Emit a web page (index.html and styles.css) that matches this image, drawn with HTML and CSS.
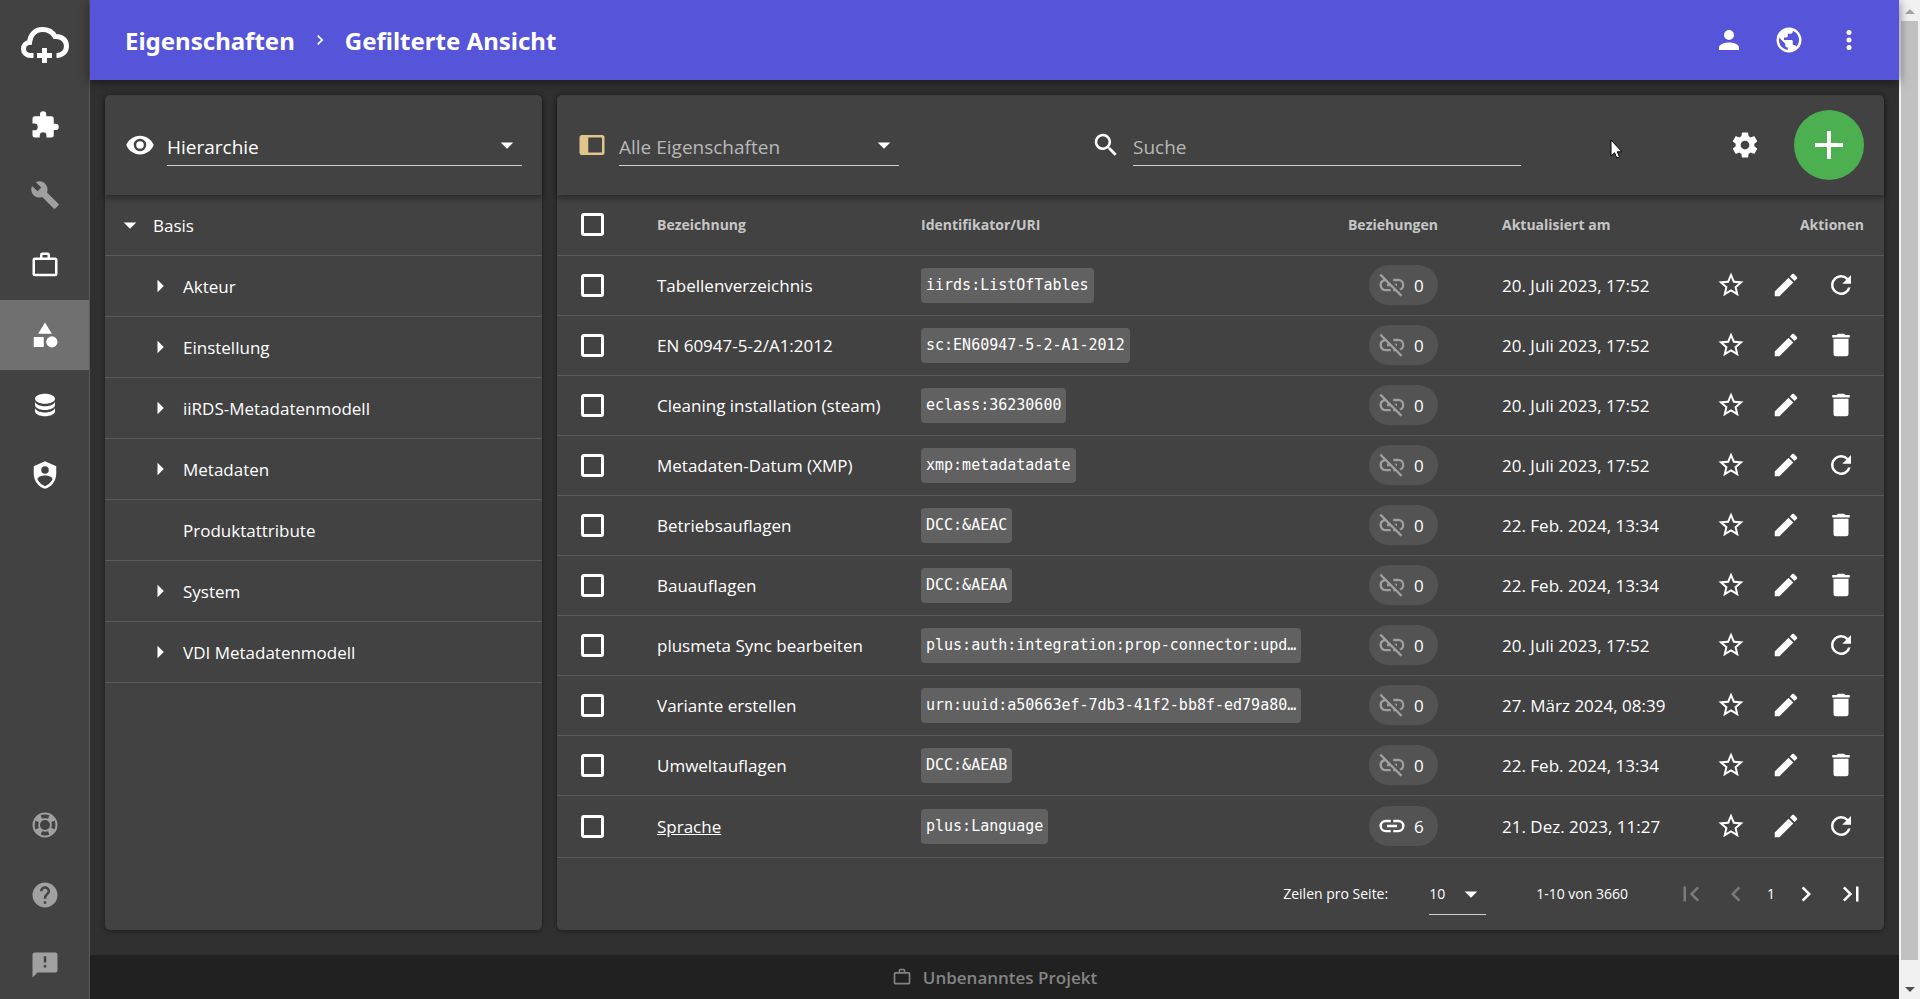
FILE: index.html
```html
<!DOCTYPE html>
<html lang="de">

<head>
    <meta charset="utf-8">
    <title>Eigenschaften</title>
    <meta name="viewport" content="width=device-width, initial-scale=1.0">
    <link rel="stylesheet" href="styles.css">
</head>

<body>
    <svg class="sprite" aria-hidden="true">
        <symbol id="i-puzzle" viewBox="0 0 24 24"><path d="M20.5 11H19V7a2 2 0 0 0-2-2h-4V3.5a2.5 2.5 0 0 0-5 0V5H4a2 2 0 0 0-2 2v3.8h1.5a2.7 2.7 0 0 1 0 5.4H2V20a2 2 0 0 0 2 2h3.8v-1.5a2.7 2.7 0 0 1 5.4 0V22H17a2 2 0 0 0 2-2v-4h1.5a2.5 2.5 0 0 0 0-5z"/></symbol>
        <symbol id="i-wrench" viewBox="0 0 24 24"><path d="M22.7 19l-9.1-9.1c.9-2.3.4-5-1.5-6.9-2-2-5-2.4-7.4-1.3L9 6 6 9 1.6 4.7C.4 7.1.9 10.1 2.9 12.1c1.9 1.9 4.6 2.4 6.9 1.5l9.1 9.1c.4.4 1 .4 1.4 0l2.3-2.3c.5-.4.5-1.1.1-1.4z"/></symbol>
        <symbol id="i-briefcase" viewBox="0 0 24 24"><path d="M20 6h-4V4a2 2 0 0 0-2-2h-4a2 2 0 0 0-2 2v2H4a2 2 0 0 0-2 2v11a2 2 0 0 0 2 2h16a2 2 0 0 0 2-2V8a2 2 0 0 0-2-2zM10 4h4v2h-4V4zm10 15H4V8h16v11z"/></symbol>
        <symbol id="i-shapes" viewBox="0 0 24 24"><path d="M11 13.5v8H3v-8h8zM12 2l5.5 9h-11L12 2zm5.5 11a4.5 4.5 0 1 1 0 9 4.5 4.5 0 0 1 0-9z"/></symbol>
        <symbol id="i-database" viewBox="0 0 24 24"><path d="M12 3C7.6 3 4 4.8 4 7s3.6 4 8 4 8-1.8 8-4-3.6-4-8-4zM4 9v3c0 2.2 3.6 4 8 4s8-1.8 8-4V9c0 2.2-3.6 4-8 4s-8-1.8-8-4zm0 5v3c0 2.2 3.6 4 8 4s8-1.8 8-4v-3c0 2.2-3.6 4-8 4s-8-1.8-8-4z"/></symbol>
        <symbol id="i-shield" viewBox="0 0 24 24"><path d="M12 1L3 5v6c0 5.55 3.84 10.74 9 12 5.16-1.26 9-6.45 9-12V5l-9-4zm0 4a3 3 0 1 1 0 6 3 3 0 0 1 0-6zm5.13 12A9.7 9.7 0 0 1 12 20.92 9.7 9.7 0 0 1 6.87 17c-.34-.5-.63-1-.87-1.53 0-1.65 2.71-3 6-3s6 1.32 6 3c-.24.53-.53 1.03-.87 1.53z"/></symbol>
        <symbol id="i-lifebuoy" viewBox="0 0 24 24"><path d="M19.79 15.41c.74-2.24.75-4.69 0-6.93l-2.74 1.11c.5 1.58.48 3.27 0 4.81l2.74 1.01m-4.24 4.33l-1.11-2.74c-1.58.5-3.29.48-4.82 0l-1.03 2.78c2.25.74 4.71.72 6.96-.04M8.46 4.26l1.13 2.74c1.58-.5 3.3-.48 4.84.02l1.07-2.74c-2.28-.76-4.75-.78-7.04-.02M4.26 15.54l2.74-1.12c-.5-1.56-.48-3.27.02-4.84L4.28 8.51c-.76 2.29-.78 4.74-.02 7.03M12 2a10 10 0 1 1 0 20 10 10 0 0 1 0-20m0 6a4 4 0 1 0 0 8 4 4 0 0 0 0-8z" fill-rule="evenodd"/></symbol>
        <symbol id="i-help" viewBox="0 0 24 24"><path d="M15.07 11.25l-.9.92C13.45 12.89 13 13.5 13 15h-2v-.5c0-1.11.45-2.11 1.17-2.83l1.24-1.26c.37-.36.59-.86.59-1.41a2 2 0 0 0-4 0H8a4 4 0 0 1 8 0c0 .88-.36 1.67-.93 2.25M13 19h-2v-2h2M12 2a10 10 0 1 0 0 20 10 10 0 0 0 0-20z"/></symbol>
        <symbol id="i-alert" viewBox="0 0 24 24"><path d="M13 10h-2V5h2m0 9h-2v-2h2m7-10H4a2 2 0 0 0-2 2v18l4-4h14a2 2 0 0 0 2-2V4a2 2 0 0 0-2-2z"/></symbol>
        <symbol id="i-account" viewBox="0 0 24 24"><path d="M12 4a4 4 0 1 1 0 8 4 4 0 0 1 0-8zm0 10c4.42 0 8 1.79 8 4v2H4v-2c0-2.21 3.58-4 8-4z"/></symbol>
        <symbol id="i-earth" viewBox="0 0 24 24"><path d="M17.9 17.39c-.26-.8-1.01-1.39-1.9-1.39h-1v-3a1 1 0 0 0-1-1H8v-2h2a1 1 0 0 0 1-1V7h2a2 2 0 0 0 2-2v-.41a7.984 7.984 0 0 1 2.9 12.8M11 19.93c-3.95-.49-7-3.85-7-7.93 0-.62.08-1.22.21-1.79L9 15v1a2 2 0 0 0 2 2M12 2a10 10 0 1 0 0 20 10 10 0 0 0 0-20z"/></symbol>
        <symbol id="i-dots" viewBox="0 0 24 24"><circle cx="12" cy="6" r="2"/><circle cx="12" cy="12" r="2"/><circle cx="12" cy="18" r="2"/></symbol>
        <symbol id="i-eye" viewBox="0 0 24 24"><path d="M12 9a3 3 0 1 0 0 6 3 3 0 0 0 0-6m0 8a5 5 0 1 1 0-10 5 5 0 0 1 0 10m0-12.5C7 4.5 2.73 7.61 1 12c1.73 4.39 6 7.5 11 7.5s9.27-3.11 11-7.5c-1.73-4.39-6-7.5-11-7.5z"/></symbol>
        <symbol id="i-down" viewBox="0 0 24 24"><path d="M7 10l5 5 5-5z"/></symbol>
        <symbol id="i-right" viewBox="0 0 24 24"><path d="M10 17l5-5-5-5z"/></symbol>
        <symbol id="i-panel" viewBox="0 0 24 24"><path d="M20 4H4a2 2 0 0 0-2 2v12a2 2 0 0 0 2 2h16a2 2 0 0 0 2-2V6a2 2 0 0 0-2-2m0 14H9V6h11v12z"/></symbol>
        <symbol id="i-search" viewBox="0 0 24 24"><path d="M9.5 3a6.5 6.5 0 0 1 4.94 10.73l.27.27h.79l5 5-1.5 1.5-5-5v-.79l-.27-.27A6.5 6.5 0 1 1 9.5 3m0 2a4.5 4.5 0 1 0 0 9 4.5 4.5 0 0 0 0-9z"/></symbol>
        <symbol id="i-cog" viewBox="0 0 24 24"><path d="M12 15.5a3.5 3.5 0 1 1 0-7 3.5 3.5 0 0 1 0 7m7.43-2.53c.04-.32.07-.64.07-.97s-.03-.66-.07-1l2.11-1.63c.19-.15.24-.42.12-.64l-2-3.46c-.12-.22-.39-.31-.61-.22l-2.49 1c-.52-.39-1.06-.73-1.69-.98l-.37-2.65A.506.506 0 0 0 14 2h-4c-.25 0-.46.18-.5.42l-.37 2.65c-.63.25-1.17.59-1.69.98l-2.49-1c-.22-.09-.49 0-.61.22l-2 3.46c-.13.22-.07.49.12.64L4.57 11c-.04.34-.07.67-.07 1s.03.65.07.97l-2.11 1.66c-.19.15-.25.42-.12.64l2 3.46c.12.22.39.3.61.22l2.49-1.01c.52.4 1.06.74 1.69.99l.37 2.65c.04.24.25.42.5.42h4c.25 0 .46-.18.5-.42l.37-2.65c.63-.26 1.17-.59 1.69-.99l2.49 1.01c.22.08.49 0 .61-.22l2-3.46c.12-.22.07-.49-.12-.64l-2.11-1.66z"/></symbol>
        <symbol id="i-plus" viewBox="0 0 24 24"><path d="M19 13h-6v6h-2v-6H5v-2h6V5h2v6h6v2z"/></symbol>
        <symbol id="i-linkoff" viewBox="0 0 24 24"><path d="M17 7h-4v1.9h4a3.1 3.1 0 0 1 .75 6.11l1.39 1.39A5 5 0 0 0 17 7m-1 4h-2.19l2 2H16v-2M2 4.27l3.11 3.11A5 5 0 0 0 7 17h4v-1.9H7a3.1 3.1 0 0 1-.41-6.17L8.66 11H8v2h2.66L13 15.34V17h1.66L19 21.34l1.27-1.27L3.27 3 2 4.27z"/></symbol>
        <symbol id="i-link" viewBox="0 0 24 24"><path d="M3.9 12A3.1 3.1 0 0 1 7 8.9h4V7H7a5 5 0 0 0 0 10h4v-1.9H7A3.1 3.1 0 0 1 3.9 12M8 13h8v-2H8v2m9-6h-4v1.9h4a3.1 3.1 0 0 1 0 6.2h-4V17h4a5 5 0 0 0 0-10z"/></symbol>
        <symbol id="i-star" viewBox="0 0 24 24"><path d="M12 15.39l-3.76 2.27.99-4.28-3.32-2.88 4.38-.37L12 6.09l1.71 4.04 4.38.37-3.32 2.88.99 4.28M22 9.24l-7.19-.61L12 2 9.19 8.63 2 9.24l5.45 4.73L5.82 21 12 17.27 18.18 21l-1.64-7.03L22 9.24z"/></symbol>
        <symbol id="i-pencil" viewBox="0 0 24 24"><path d="M20.71 7.04c.39-.39.39-1.04 0-1.41l-2.34-2.34c-.37-.39-1.02-.39-1.41 0l-1.84 1.83 3.75 3.75M3 17.25V21h3.75L17.81 9.93l-3.75-3.75L3 17.25z"/></symbol>
        <symbol id="i-refresh" viewBox="0 0 24 24"><path d="M17.65 6.35A7.958 7.958 0 0 0 12 4a8 8 0 1 0 7.73 10h-2.08A6 6 0 1 1 12 6c1.66 0 3.14.69 4.22 1.78L13 11h7V4l-2.35 2.35z"/></symbol>
        <symbol id="i-delete" viewBox="0 0 24 24"><path d="M19 4h-3.5l-1-1h-5l-1 1H5v2h14M6 19a2 2 0 0 0 2 2h8a2 2 0 0 0 2-2V7H6v12z"/></symbol>
        <symbol id="i-first" viewBox="0 0 24 24"><path d="M18.41 16.59L13.82 12l4.59-4.59L17 6l-6 6 6 6 1.41-1.41M6 6h2v12H6V6z"/></symbol>
        <symbol id="i-prev" viewBox="0 0 24 24"><path d="M15.41 16.58L10.83 12l4.58-4.59L14 6l-6 6 6 6 1.41-1.42z"/></symbol>
        <symbol id="i-next" viewBox="0 0 24 24"><path d="M8.59 16.58L13.17 12 8.59 7.41 10 6l6 6-6 6-1.41-1.42z"/></symbol>
        <symbol id="i-last" viewBox="0 0 24 24"><path d="M5.59 7.41L10.18 12l-4.59 4.59L7 18l6-6-6-6-1.41 1.41M16 6h2v12h-2V6z"/></symbol>
    </svg>

    <nav class="sidebar">
        <a class="logo" href="#" aria-label="Start">
            <svg viewBox="21 27 48 36" width="48" height="36">
                <path d="M33.500 55.500H31c-4.500 0-7.500-3-7.500-6.500s2.500-6.300 6-6.500C30 35 35 29.500 42.500 29.500c5.500 0 10 2.500 12.500 7C62 36 66.500 40.500 66.500 46c0 5.500-4 9.500-10 9.500" fill="none" stroke="currentColor" stroke-width="5"/>
                <path d="M42 48h5v5h5v5h-5v5h-5v-5h-5v-5h5z"/>
            </svg>
        </a>
        <a href="#" aria-label="Module"><svg class="icon"><use href="#i-puzzle"/></svg></a>
        <a class="muted" href="#" aria-label="Werkzeuge"><svg class="icon"><use href="#i-wrench"/></svg></a>
        <a href="#" aria-label="Projekte"><svg class="icon"><use href="#i-briefcase"/></svg></a>
        <a class="active" href="#" aria-label="Eigenschaften"><svg class="icon"><use href="#i-shapes"/></svg></a>
        <a href="#" aria-label="Daten"><svg class="icon"><use href="#i-database"/></svg></a>
        <a href="#" aria-label="Verwaltung"><svg class="icon"><use href="#i-shield"/></svg></a>
        <a class="muted bottom" href="#" aria-label="Support"><svg class="icon"><use href="#i-lifebuoy"/></svg></a>
        <a class="muted" href="#" aria-label="Hilfe"><svg class="icon"><use href="#i-help"/></svg></a>
        <a class="muted" href="#" aria-label="Feedback"><svg class="icon"><use href="#i-alert"/></svg></a>
    </nav>

    <div class="page">
        <header class="topbar">
            <a href="#">Eigenschaften</a>
            <svg class="icon small"><use href="#i-next"/></svg>
            <a href="#">Gefilterte Ansicht</a>
            <div class="topbar-actions">
                <button aria-label="Konto"><svg class="icon"><use href="#i-account"/></svg></button>
                <button aria-label="Sprache"><svg class="icon"><use href="#i-earth"/></svg></button>
                <button aria-label="Mehr"><svg class="icon"><use href="#i-dots"/></svg></button>
            </div>
        </header>

        <main>
            <section class="card tree">
                <div class="toolbar">
                    <svg class="icon"><use href="#i-eye"/></svg>
                    <div class="select">
                        <select aria-label="Ansicht"><option>Hierarchie</option></select>
                        <svg class="icon"><use href="#i-down"/></svg>
                    </div>
                </div>
                <ul>
                    <li class="root"><svg class="icon"><use href="#i-down"/></svg>Basis</li>
                    <li><svg class="icon"><use href="#i-right"/></svg>Akteur</li>
                    <li><svg class="icon"><use href="#i-right"/></svg>Einstellung</li>
                    <li><svg class="icon"><use href="#i-right"/></svg>iiRDS-Metadatenmodell</li>
                    <li><svg class="icon"><use href="#i-right"/></svg>Metadaten</li>
                    <li><svg class="icon"></svg>Produktattribute</li>
                    <li><svg class="icon"><use href="#i-right"/></svg>System</li>
                    <li><svg class="icon"><use href="#i-right"/></svg>VDI Metadatenmodell</li>
                </ul>
            </section>

            <section class="card list">
                <div class="toolbar">
                    <svg class="icon gold"><use href="#i-panel"/></svg>
                    <div class="select filter">
                        <select aria-label="Filter"><option>Alle Eigenschaften</option></select>
                        <svg class="icon"><use href="#i-down"/></svg>
                    </div>
                    <label class="search">
                        <svg class="icon"><use href="#i-search"/></svg>
                        <input type="text" placeholder="Suche" aria-label="Suche">
                    </label>
                    <button class="settings" aria-label="Einstellungen"><svg class="icon"><use href="#i-cog"/></svg></button>
                    <button class="add" aria-label="Neu"><svg class="icon large"><use href="#i-plus"/></svg></button>
                </div>

                <table>
                    <colgroup>
                        <col class="c-check">
                        <col class="c-name">
                        <col>
                        <col class="c-rel">
                        <col class="c-date">
                        <col class="c-act">
                    </colgroup>
                    <thead>
                        <tr>
                            <th><input type="checkbox" aria-label="Alle auswählen"></th>
                            <th>Bezeichnung</th>
                            <th>Identifikator/URI</th>
                            <th class="rel">Beziehungen</th>
                            <th class="date">Aktualisiert am</th>
                            <th class="act">Aktionen</th>
                        </tr>
                    </thead>
                    <tbody id="rows"></tbody>
                </table>

                <div class="pagination">
                    <label for="per-page">Zeilen pro Seite:</label>
                    <div class="select per-page">
                        <select id="per-page"><option>10</option></select>
                        <svg class="icon"><use href="#i-down"/></svg>
                    </div>
                    <span class="range">1-10 von 3660</span>
                    <div class="pager">
                        <button disabled aria-label="Erste Seite"><svg class="icon"><use href="#i-first"/></svg></button>
                        <button disabled aria-label="Vorherige Seite"><svg class="icon"><use href="#i-prev"/></svg></button>
                        <span>1</span>
                        <button aria-label="Nächste Seite"><svg class="icon"><use href="#i-next"/></svg></button>
                        <button aria-label="Letzte Seite"><svg class="icon"><use href="#i-last"/></svg></button>
                    </div>
                </div>
            </section>
        </main>

        <footer>
            <svg class="icon small"><use href="#i-briefcase"/></svg>
            Unbenanntes Projekt
        </footer>
    </div>

    <div class="scrollbar" aria-hidden="true">
        <svg viewBox="0 0 21 21"><path d="M6 14l5-5 5 5z" fill="#a3a3a3"/></svg>
        <div class="thumb"></div>
        <svg viewBox="0 0 21 21"><path d="M6 8l5 5 5-5z" fill="#505050"/></svg>
    </div>

    <svg class="cursor" viewBox="0 0 13 20" width="13" height="20"><path d="M1 1v16l3.500-3.200 2.300 5.200 2.700-1.200-2.300-5H12z" fill="#fff" stroke="#000"/></svg>

    <script src="rows.js"></script>
</body>

</html>
```
FILE: styles.css
```css
:root {
    --bg-color: #303030;
    --card-color: #424242;
    --line-color: #5a5a5a;
    --primary-color: #5654d9;
    --muted-color: #a0a0a0;
    --label-color: #c6c6c6;
    --green-color: #4caf50;
}

* {
    box-sizing: border-box;
}

body {
    margin: 0;
    display: flex;
    min-height: 100vh;
    font-family: "Open Sans", "Noto Sans", sans-serif;
    font-size: 17px;
    color: #fff;
    background: var(--bg-color);
}

a {
    color: inherit;
    text-decoration: none;
}

button {
    display: flex;
    align-items: center;
    justify-content: center;
    padding: 0;
    border: none;
    background: none;
    color: inherit;
    cursor: pointer;
}

.sprite {
    display: none;
}

.icon {
    flex: none;
    display: block;
    width: 30px;
    height: 30px;
    fill: currentColor;
}

.icon.small {
    width: 20px;
    height: 20px;
}

.icon.large {
    width: 48px;
    height: 48px;
}

.gold {
    color: #e0c68a;
}

/* sidebar */
.sidebar {
    flex: none;
    display: flex;
    flex-direction: column;
    width: 90px;
    background: var(--card-color);
    border-right: 1px solid var(--line-color);
}

.sidebar a {
    display: flex;
    align-items: center;
    justify-content: center;
    height: 70px;
}

.sidebar .logo {
    height: 90px;
    fill: currentColor;
}

.sidebar .active {
    background: #707070;
}

.sidebar .muted {
    color: var(--muted-color);
}

.sidebar .bottom {
    margin-top: auto;
}

/* page */
.page {
    flex: 1;
    min-width: 0;
    display: flex;
    flex-direction: column;
}

.topbar {
    position: relative;
    display: flex;
    align-items: center;
    gap: 15px;
    height: 80px;
    padding: 0 35px;
    background: var(--primary-color);
    box-shadow: 0 2px 10px rgba(0, 0, 0, 0.5);
    font-family: "Noto Sans", sans-serif;
    font-size: 24px;
    font-weight: 700;
}

.topbar-actions {
    display: flex;
    gap: 30px;
    margin-left: auto;
}

main {
    flex: 1;
    display: flex;
    gap: 15px;
    padding: 15px 15px 25px;
}

.card {
    display: flex;
    flex-direction: column;
    background: var(--card-color);
    border-radius: 5px;
    box-shadow: 0 1px 5px rgba(0, 0, 0, 0.4);
}

.tree {
    flex: 0 0 437px;
}

.list {
    flex: 1;
    min-width: 0;
}

.toolbar {
    display: flex;
    align-items: center;
    height: 100px;
    padding: 0 20px;
    border-radius: 5px 5px 0 0;
    box-shadow: 0 3px 6px rgba(0, 0, 0, 0.4);
}

.select {
    flex: 1;
    position: relative;
    height: 42px;
    margin-left: 12px;
}

.select select,
.search input {
    width: 100%;
    height: 100%;
    padding: 4px 0 0;
    border: none;
    border-bottom: 1px solid #d0d0d0;
    border-radius: 0;
    outline: none;
    background: none;
    color: inherit;
    font-family: inherit;
    font-size: 19px;
    appearance: none;
}

.select .icon {
    position: absolute;
    top: 6px;
    right: 0;
    pointer-events: none;
}

.filter {
    flex: 0 0 280px;
}

.filter select,
.search input::placeholder {
    color: #b8b8b8;
    opacity: 1;
}

.search {
    flex: 1;
    display: flex;
    align-items: center;
    gap: 12px;
    height: 42px;
    margin: 0 209px 0 192px;
}

.settings {
    margin-right: 34px;
}

.add {
    width: 70px;
    height: 70px;
    border-radius: 50%;
    background: var(--green-color);
}

/* hierarchy */
.tree ul {
    margin: 0;
    padding: 0;
    list-style: none;
}

.tree li {
    display: flex;
    align-items: center;
    gap: 8px;
    height: 61px;
    padding-left: 40px;
    border-bottom: 1px solid var(--line-color);
}

.tree .root {
    padding-left: 10px;
}

/* table */
table {
    width: 100%;
    table-layout: fixed;
    border-collapse: collapse;
}

.c-check {
    width: 100px;
}

.c-name {
    width: 264px;
}

.c-rel {
    width: 120px;
}

.c-date {
    width: 262px;
}

.c-act {
    width: 184px;
}

th,
td {
    height: 60px;
    padding: 0;
    border-bottom: 1px solid var(--line-color);
    text-align: left;
    white-space: nowrap;
}

tbody tr:last-child td {
    height: 62px;
}

th {
    color: var(--label-color);
    font-size: 14px;
    font-weight: 700;
}

th:first-child,
td:first-child {
    padding-left: 24px;
}

input[type="checkbox"] {
    display: block;
    width: 23px;
    height: 23px;
    margin: 0;
    border: 3px solid #fff;
    border-radius: 3px;
    appearance: none;
}

code {
    display: inline-block;
    padding: 0 5px;
    border-radius: 4px;
    background: #616161;
    font-family: "DejaVu Sans Mono", monospace;
    font-size: 15px;
    line-height: 35px;
    vertical-align: middle;
}

.used {
    text-decoration: underline;
}

th.rel {
    text-align: right;
}

.badge {
    display: flex;
    align-items: center;
    gap: 7px;
    width: 69px;
    height: 40px;
    margin-left: auto;
    padding-left: 8px;
    border-radius: 20px;
    background: #535353;
}

.badge.off .icon {
    color: var(--muted-color);
}

.date {
    padding-left: 64px;
}

th.act {
    padding-right: 20px;
    text-align: right;
}

.actions {
    display: flex;
    justify-content: flex-end;
    gap: 25px;
    padding-right: 28px;
}

/* pagination */
.pagination {
    display: flex;
    align-items: center;
    justify-content: flex-end;
    height: 72px;
    margin-top: auto;
    padding-right: 18px;
    font-size: 14px;
}

.per-page {
    flex: 0 0 57px;
    margin: 0 50px 0 41px;
}

.per-page select {
    padding-top: 0;
    font-size: 14px;
}

.pager {
    display: flex;
    align-items: center;
    gap: 15px;
    margin-left: 48px;
}

.pager button:disabled {
    color: #7a7a7a;
}

.pager span {
    width: 10px;
    text-align: center;
}

footer {
    display: flex;
    align-items: center;
    justify-content: center;
    gap: 11px;
    height: 45px;
    background: #212121;
    color: #848484;
    font-size: 17px;
    font-weight: 600;
}

.scrollbar {
    flex: none;
    display: flex;
    flex-direction: column;
    width: 21px;
    background: #f1f1f1;
}

.scrollbar .thumb {
    flex: 1;
    margin: 0 2px 19px;
    background: #c1c1c1;
}

.cursor {
    position: absolute;
    top: 139px;
    left: 1610px;
}
```
FILE: rows.js
```javascript
const rows = [
    ['Tabellenverzeichnis', 'iirds:ListOfTables', 0, '20. Juli 2023, 17:52', 'refresh'],
    ['EN 60947-5-2/A1:2012', 'sc:EN60947-5-2-A1-2012', 0, '20. Juli 2023, 17:52', 'delete'],
    ['Cleaning installation (steam)', 'eclass:36230600', 0, '20. Juli 2023, 17:52', 'delete'],
    ['Metadaten-Datum (XMP)', 'xmp:metadatadate', 0, '20. Juli 2023, 17:52', 'refresh'],
    ['Betriebsauflagen', 'DCC:&amp;AEAC', 0, '22. Feb. 2024, 13:34', 'delete'],
    ['Bauauflagen', 'DCC:&amp;AEAA', 0, '22. Feb. 2024, 13:34', 'delete'],
    ['plusmeta Sync bearbeiten', 'plus:auth:integration:prop-connector:upd…', 0, '20. Juli 2023, 17:52', 'refresh'],
    ['Variante erstellen', 'urn:uuid:a50663ef-7db3-41f2-bb8f-ed79a80…', 0, '27. März 2024, 08:39', 'delete'],
    ['Umweltauflagen', 'DCC:&amp;AEAB', 0, '22. Feb. 2024, 13:34', 'delete'],
    ['Sprache', 'plus:Language', 6, '21. Dez. 2023, 11:27', 'refresh'],
];

const icon = name => `<svg class="icon"><use href="#i-${name}"/></svg>`;

document.getElementById('rows').innerHTML = rows.map(([name, uri, count, date, action]) => `
    <tr>
        <td><input type="checkbox" aria-label="${name}"></td>
        <td>${count ? `<a class="used" href="#">${name}</a>` : name}</td>
        <td><code>${uri}</code></td>
        <td><div class="badge ${count ? '' : 'off'}">${icon(count ? 'link' : 'linkoff')}${count}</div></td>
        <td class="date">${date}</td>
        <td>
            <div class="actions">
                <button aria-label="Favorit">${icon('star')}</button>
                <button aria-label="Bearbeiten">${icon('pencil')}</button>
                <button aria-label="${action === 'delete' ? 'Löschen' : 'Zurücksetzen'}">${icon(action)}</button>
            </div>
        </td>
    </tr>`).join('');
```
